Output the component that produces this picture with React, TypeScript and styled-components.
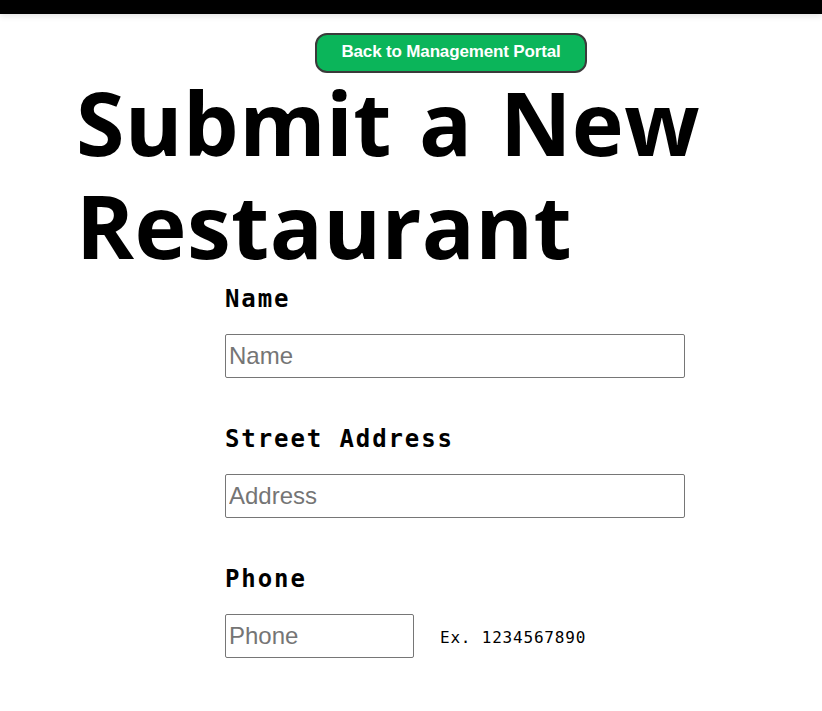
import React from "react";
import styled, { createGlobalStyle } from "styled-components";

const Global = createGlobalStyle`
  html, body { margin: 0; padding: 0; background: #fff; }
  body { font-family: "Liberation Sans", Arial, sans-serif; }
`;

const TopBar = styled.div`
  height: 14px;
  background: #000;
  box-shadow: 0 2px 6px rgba(0, 0, 0, 0.12);
`;

const Page = styled.main`
  display: flex;
  flex-direction: column;
  padding-top: 19px;
`;

const ButtonRow = styled.div`
  display: flex;
  padding-left: 315px;
`;

const BackButton = styled.button`
  width: 272px;
  height: 40px;
  box-sizing: border-box;
  background: #0bb55a;
  border: 2px solid #3a3a3a;
  border-radius: 12px;
  color: #fff;
  font-family: "Liberation Sans", Arial, sans-serif;
  font-weight: 700;
  font-size: 17px;
  letter-spacing: -0.15px;
  padding: 0 0 2px;
  cursor: pointer;
`;

const Title = styled.h1`
  margin: -2px 0 0;
  padding-left: 76px;
  font-family: "Open Sans", "Noto Sans", sans-serif;
  font-weight: 700;
  font-size: 88px;
  letter-spacing: 0.4px;
  word-spacing: 4px;
  line-height: 103px;
  color: #000;
  width: 700px;
`;

const Form = styled.form`
  display: flex;
  flex-direction: column;
  padding-left: 225px;
  margin-top: 7px;
  gap: 46px;
`;

const Field = styled.div`
  display: flex;
  flex-direction: column;
  gap: 20px;
`;

const Label = styled.label`
  font-family: "DejaVu Sans Mono", "Liberation Mono", monospace;
  font-weight: 700;
  font-size: 24px;
  letter-spacing: 1.9px;
  line-height: 30px;
  color: #000;
`;

const InputRow = styled.div`
  display: flex;
  align-items: center;
  gap: 26px;
`;

const Input = styled.input<{ $w: number }>`
  width: ${(p) => p.$w}px;
  height: 44px;
  box-sizing: border-box;
  border: 1px solid #767676;
  border-radius: 2px;
  padding: 0 3px;
  font-family: "Liberation Sans", Arial, sans-serif;
  font-size: 24px;
  color: #000;
  &::placeholder { color: #757575; }
`;

const Hint = styled.span`
  font-family: "DejaVu Sans Mono", "Liberation Mono", monospace;
  font-size: 16px;
  letter-spacing: 0.8px;
  color: #000;
  padding-top: 2px;
`;

export default function App() {
  return (
    <>
      <Global />
      <TopBar />
      <Page>
        <ButtonRow>
          <BackButton type="button">Back to Management Portal</BackButton>
        </ButtonRow>
        <Title>Submit a New Restaurant</Title>
        <Form onSubmit={(e) => e.preventDefault()}>
          <Field>
            <Label htmlFor="name">Name</Label>
            <InputRow>
              <Input id="name" $w={460} placeholder="Name" />
            </InputRow>
          </Field>
          <Field>
            <Label htmlFor="address">Street Address</Label>
            <InputRow>
              <Input id="address" $w={460} placeholder="Address" />
            </InputRow>
          </Field>
          <Field>
            <Label htmlFor="phone">Phone</Label>
            <InputRow>
              <Input id="phone" $w={189} placeholder="Phone" />
              <Hint>Ex. 1234567890</Hint>
            </InputRow>
          </Field>
        </Form>
      </Page>
    </>
  );
}
